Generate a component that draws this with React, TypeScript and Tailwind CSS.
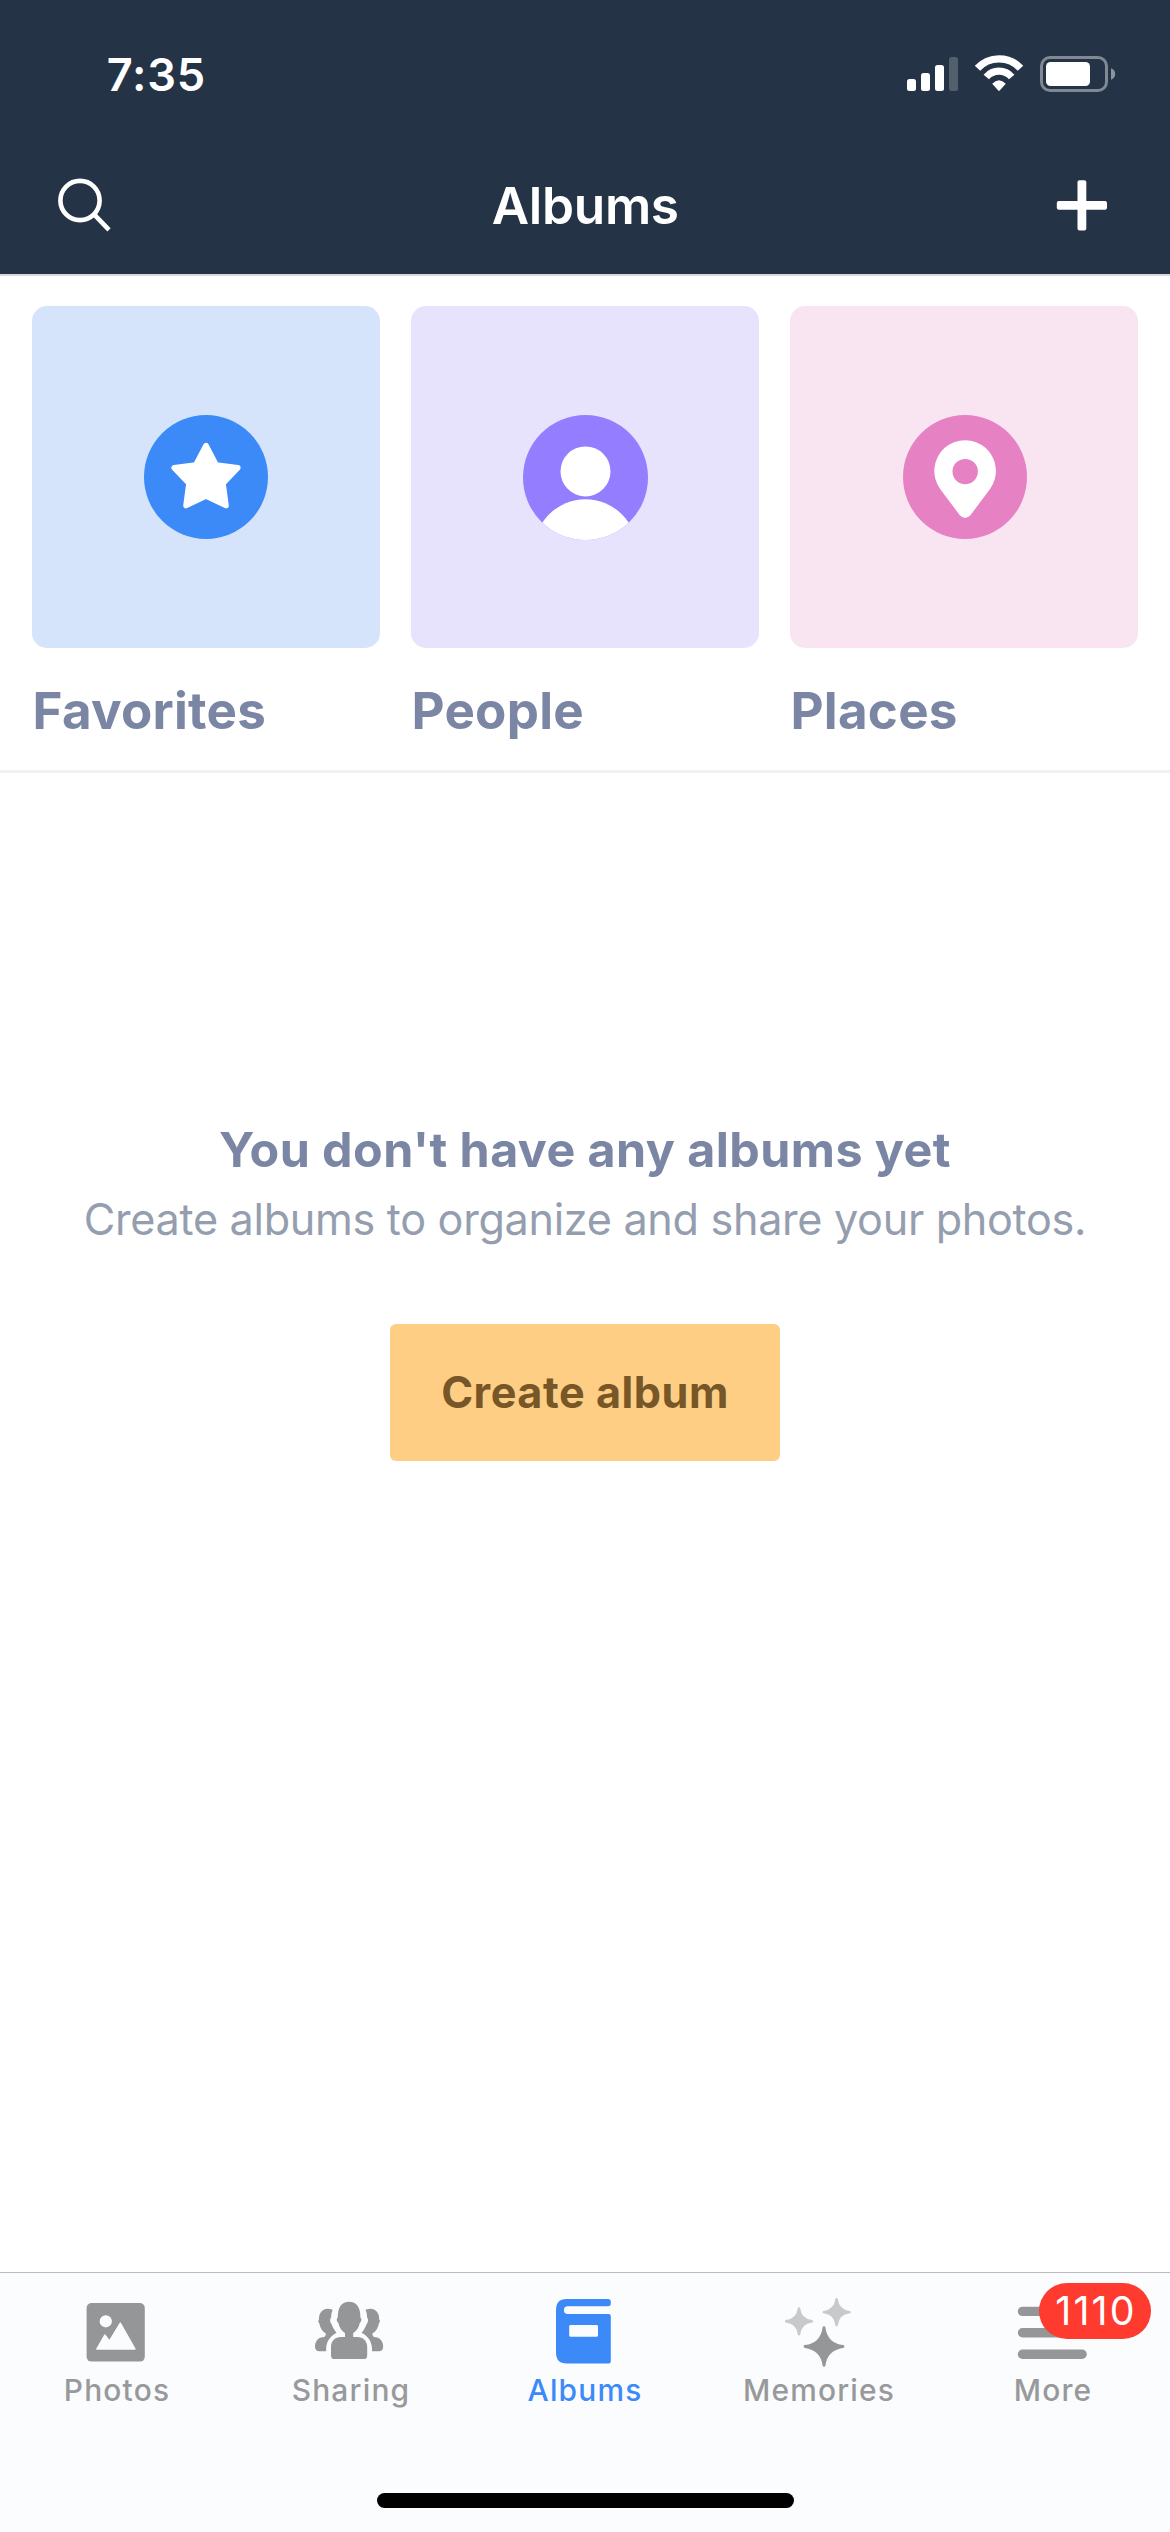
import type { ReactNode } from 'react';

function StatusIcons() {
  return (
    <svg className="h-[59px] w-[220px]" viewBox="900 45 220 59" fill="white">
      <rect x="907" y="79" width="9" height="12" rx="2.5" />
      <rect x="921" y="73" width="9" height="18" rx="2.5" />
      <rect x="935" y="65" width="9" height="26" rx="2.5" />
      <rect x="949" y="57" width="9" height="34" rx="2.5" opacity="0.22" />
      <g fill="none" stroke="white">
        <path d="M977.5 68.3A29.2 29.2 0 0 1 1020.5 68.3" strokeWidth="7.4" />
        <path d="M986.3 77A16.8 16.8 0 0 1 1011.7 77" strokeWidth="7.2" />
      </g>
      <path d="M992.2 83.8Q999 76.6 1005.8 83.8L999.7 90.5Q999 91.3 998.3 90.5Z" />
      <rect x="1041.5" y="57.5" width="65" height="33" rx="8.5" fill="none" stroke="white" strokeWidth="3" opacity="0.42" />
      <rect x="1046" y="62" width="44" height="24" rx="4.5" />
      <path d="M1111 68.3Q1115.2 70 1115.2 74T1111 79.7Z" opacity="0.48" />
    </svg>
  );
}

function SearchIcon() {
  return (
    <svg className="size-[58px]" viewBox="56 176.5 58 58" fill="none" stroke="white" strokeWidth="4.6">
      <circle cx="80" cy="200" r="19.6" />
      <path d="M94.3 214.2L109 229.4" />
    </svg>
  );
}

function PlusIcon() {
  return (
    <svg className="size-[58px]" viewBox="1053.5 176.5 58 58" fill="white">
      <rect x="1078" y="179.8" width="8.8" height="50.2" rx="2" />
      <rect x="1057.3" y="200.4" width="50.2" height="8.8" rx="2" />
    </svg>
  );
}

function StarBadge() {
  return (
    <svg className="size-[124px]" viewBox="0 0 124 124">
      <circle cx="62" cy="62" r="62" fill="#3c8af8" />
      <path
        d="M62 30.6L72.2 50.1L93.8 52.9L79 68.4L82 90.6L62 80.9L42 90.6L45 68.4L30.2 52.9L51.8 50.1Z"
        fill="white"
        stroke="white"
        strokeWidth="5.6"
        strokeLinejoin="round"
      />
    </svg>
  );
}

function PersonBadge() {
  return (
    <svg className="size-[125px]" viewBox="0 0 125 125">
      <clipPath id="person-disc">
        <circle cx="62.5" cy="62.5" r="62.5" />
      </clipPath>
      <g clipPath="url(#person-disc)">
        <rect width="125" height="125" fill="#957dff" />
        <circle cx="62.5" cy="56.4" r="25" fill="white" />
        <circle cx="62.5" cy="136" r="51.7" fill="white" />
      </g>
    </svg>
  );
}

function PinBadge() {
  return (
    <svg className="ml-[2px] size-[124px]" viewBox="0 0 124 124">
      <circle cx="62" cy="62" r="62" fill="#e681c3" />
      <path d="M37.3 74.2A30.8 30.8 0 1 1 86.9 74.2L67.4 100.2Q62.1 105.6 56.8 100.2Z" fill="white" />
      <circle cx="62.2" cy="56.6" r="12.7" fill="#e681c3" />
    </svg>
  );
}

function PhotosIcon() {
  return (
    <svg className="h-20 w-[72px]" viewBox="81 2292 72 80">
      <rect x="86.6" y="2303" width="58.2" height="58.6" rx="5" fill="#959698" />
      <circle cx="105.8" cy="2321.3" r="6.1" fill="#fbfcfe" />
      <path
        d="M96.8 2349L104.8 2335L109.4 2341L120.3 2323L135 2349Z"
        fill="#fbfcfe"
        stroke="#fbfcfe"
        strokeWidth="1.4"
        strokeLinejoin="round"
      />
    </svg>
  );
}

function SharingIcon() {
  const side =
    'M332.7 2309.8C325 2306.5 318.6 2311 319 2319.5C317.8 2320.5 318.2 2322.6 319.3 2323.3C319.8 2327.5 322.3 2331.5 325.8 2333.6C326 2335.8 324.8 2337.2 322.6 2337.3C318.2 2337.6 315 2341.5 315 2346.5C315 2349.7 316.6 2351.2 319 2351.2H326.2C325.6 2342.5 329.5 2336.6 336.6 2332.8C334.2 2329.8 332.6 2327 331.8 2324.4C329.8 2322.4 329.6 2318.8 331.2 2317.2C331.2 2314.4 331.7 2312 332.7 2309.8Z';
  return (
    <svg className="h-20 w-[72px]" viewBox="315 2292 72 80" fill="#959698">
      <path d={side} />
      <path d={side} transform="matrix(-1 0 0 1 698.2 0)" />
      <path d="M349.1 2301.7C341.8 2301.7 337.6 2307 337.8 2317.6C336.2 2318.6 336.7 2322 338.3 2322.8C339.2 2327.6 341.8 2331 345 2333V2337H341C335 2337 331 2341 331 2347V2355.4Q331 2359 334.6 2359H363.6Q367.2 2359 367.2 2355.4V2347C367.2 2341 363.2 2337 357.2 2337H353.2V2333C356.4 2331 359 2327.6 359.9 2322.8C361.5 2322 362 2318.6 360.4 2317.6C360.6 2307 356.4 2301.7 349.1 2301.7Z" />
    </svg>
  );
}

function AlbumsIcon() {
  return (
    <svg className="h-20 w-[72px]" viewBox="549 2292 72 80">
      <path
        d="M566.5 2299H608Q610.8 2299 610.8 2301.6V2303.6Q610.8 2306.2 608 2306.2H567.8A3.9 3.9 0 0 0 567.8 2314H608.6Q610.8 2314 610.8 2316.2V2361.3Q610.8 2363.5 608.6 2363.5H566.5Q556 2363.5 556 2352.5V2310Q556 2299 566.5 2299Z"
        fill="#3c8af8"
      />
      <rect x="569.2" y="2325" width="28.8" height="11.8" rx="1.4" fill="#fbfcfe" />
    </svg>
  );
}

function MemoriesIcon() {
  return (
    <svg className="h-20 w-[72px]" viewBox="783 2292 72 80" strokeLinejoin="round">
      <g fill="#c8c9cb" stroke="#c8c9cb" strokeWidth="2.4">
        <path d="M799 2308.4Q800.4 2319.9 811.9 2321.3Q800.4 2322.7 799 2334.4Q797.6 2322.7 786.1 2321.3Q797.6 2319.9 799 2308.4Z" />
        <path d="M836.6 2299.2Q838 2310.7 849.7 2312.1Q838 2313.5 836.6 2325Q835.2 2313.5 823.7 2312.1Q835.2 2310.7 836.6 2299.2Z" />
      </g>
      <path
        d="M824 2327.6Q826.2 2344.3 843 2346.5Q826.2 2348.7 824 2365.4Q821.8 2348.7 805 2346.5Q821.8 2344.3 824 2327.6Z"
        fill="#959698"
        stroke="#959698"
        strokeWidth="2.8"
      />
    </svg>
  );
}

function MoreIcon() {
  return (
    <svg className="h-20 w-[72px]" viewBox="1017 2292 72 80" fill="#959698">
      <rect x="1017.8" y="2306.7" width="69" height="9.4" rx="4.7" />
      <rect x="1017.8" y="2328.1" width="69" height="9.4" rx="4.7" />
      <rect x="1017.8" y="2349.5" width="69" height="9.4" rx="4.7" />
    </svg>
  );
}

function Category({ label, tile, children }: { label: string; tile: string; children: ReactNode }) {
  return (
    <div className="w-[348px]">
      <div className={'flex h-[342px] items-center justify-center rounded-[15px] ' + tile}>{children}</div>
      <h2 className="mt-8 pl-[0.5px] text-[51.1px] leading-[61px] font-bold tracking-[0.25px] text-[#7b86a5]">{label}</h2>
    </div>
  );
}

function Tab({ label, active, badge, children }: { label: string; active?: boolean; badge?: string; children: ReactNode }) {
  return (
    <button className="relative flex flex-1 flex-col items-center">
      {children}
      <span
        className={
          'text-[29.9px] leading-9 font-medium tracking-[1.2px] ' + (active ? 'text-[#3c8af8]' : 'text-[#98999b]')
        }
      >
        {label}
      </span>
      {badge && (
        <span className="absolute top-[-9px] left-[103px] flex h-14 w-28 items-center justify-center rounded-full bg-[#ff3b30] pl-[2px] text-[39.3px] leading-none tracking-[2.2px] text-white">
          {badge}
        </span>
      )}
    </button>
  );
}

export default function App() {
  return (
    <div className="flex h-[2532px] w-[1170px] flex-col overflow-hidden bg-white font-['Inter',sans-serif]">
      <header className="h-[276px] border-b-2 border-[#d9d9da] bg-[#253346] text-white">
        <div className="flex h-[149px] items-center justify-between pr-[50px] pl-[106.8px]">
          <span className="text-[45.2px] leading-none font-semibold tracking-[0.8px]">7:35</span>
          <StatusIcons />
        </div>
        <div className="flex h-[113px] items-center justify-between pr-[58.5px] pl-14">
          <SearchIcon />
          <h1 className="pl-[3px] text-[51.4px] leading-none font-semibold tracking-[-0.3px]">Albums</h1>
          <PlusIcon />
        </div>
      </header>

      <section className="flex gap-[31px] border-b-3 border-[#f1f1f2] px-8 pt-[30px] pb-[29px]">
        <Category label="Favorites" tile="bg-[#d5e4fa]">
          <StarBadge />
        </Category>
        <Category label="People" tile="bg-[#e7e3fc]">
          <PersonBadge />
        </Category>
        <Category label="Places" tile="bg-[#f9e5f1]">
          <PinBadge />
        </Category>
      </section>

      <main className="flex flex-1 flex-col items-center pt-[347px]">
        <h3 className="text-[48.4px] leading-[60px] font-bold tracking-[0.43px] text-[#7b86a5]">
          You don't have any albums yet
        </h3>
        <p className="mt-[13px] text-[43.2px] leading-[52px] tracking-[-0.32px] text-[#959eae]">
          Create albums to organize and share your photos.
        </p>
        <button className="mt-[79px] h-[137px] w-[390px] rounded-[6px] bg-[#ffce85] text-[43.2px] leading-none font-bold tracking-[0.53px] text-[#775727]">
          Create album
        </button>
      </main>

      <footer className="flex h-[260px] flex-col items-center border-t border-[#b9babd] bg-[#fbfcfe] pt-[19px]">
        <nav className="flex w-full">
          <Tab label="Photos">
            <PhotosIcon />
          </Tab>
          <Tab label="Sharing">
            <SharingIcon />
          </Tab>
          <Tab label="Albums" active>
            <AlbumsIcon />
          </Tab>
          <Tab label="Memories">
            <MemoriesIcon />
          </Tab>
          <Tab label="More" badge="1110">
            <MoreIcon />
          </Tab>
        </nav>
        <div className="mt-[85px] h-[15px] w-[417px] rounded-full bg-black" />
      </footer>
    </div>
  );
}
